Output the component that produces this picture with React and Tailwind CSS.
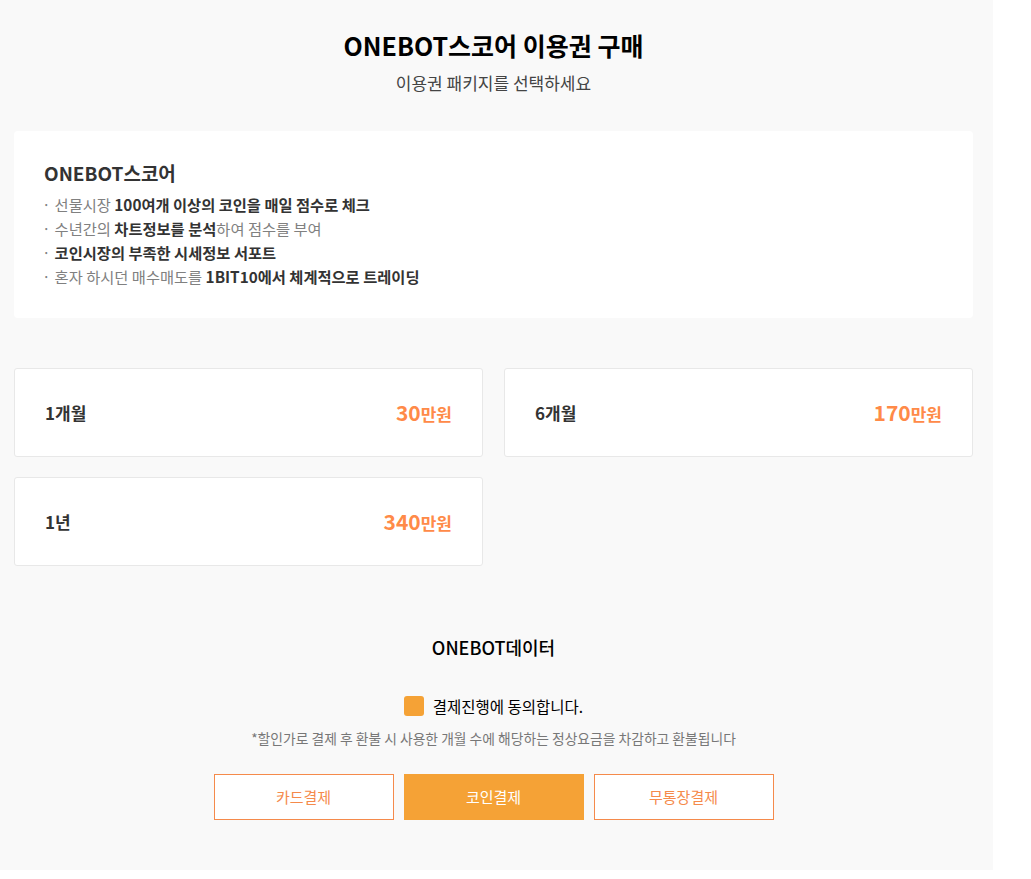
import React, { useState } from "react";

const plans = [
  { id: 1, label: "1개월", price: "30" },
  { id: 2, label: "6개월", price: "170" },
  { id: 3, label: "1년", price: "340" },
];

const features = [
  [["선물시장 ", false], ["100여개 이상의 코인을 매일 점수로 체크", true]],
  [["수년간의 ", false], ["차트정보를 분석", true], ["하여 점수를 부여", false]],
  [["코인시장의 부족한 시세정보 서포트", true]],
  [["혼자 하시던 매수매도를 ", false], ["1BIT10에서 체계적으로 트레이딩", true]],
];

export default function App() {
  const [agree, setAgree] = useState(true);
  const [method, setMethod] = useState("coin");

  return (
    <div
      className="w-[993px] bg-[#f9f9f9] pl-[14px] pr-[20px] pt-[30px] pb-[50px]"
      style={{ fontFamily: '"Noto Sans CJK KR", "Noto Sans", sans-serif' }}
    >
      <h1 className="text-center text-[25px] leading-[31px] font-bold text-black">
        ONEBOT스코어 이용권 구매
      </h1>
      <p className="mt-[10px] text-center text-[17px] leading-[24px] text-[#444]">
        이용권 패키지를 선택하세요
      </p>

      <div className="mt-[36px] bg-white rounded-[4px] pl-[30px] pt-[28px] pb-[30px]">
        <h2 className="text-[19px] leading-[28px] font-bold text-[#333]">ONEBOT스코어</h2>
        <ul className="mt-[5px]">
          {features.map((line, i) => (
            <li key={i} className="text-[15.3px] leading-[24px] text-[#808080]">
              <span className="-ml-[2px] mr-[4px]">·</span>
              {line.map(([t, bold], j) => (
                <span key={j} className={bold ? "font-bold text-[#333]" : ""}>
                  {t}
                </span>
              ))}
            </li>
          ))}
        </ul>
      </div>

      <div className="mt-[50px] grid grid-cols-2 gap-x-[21px] gap-y-[20px]">
        {plans.map((p) => (
          <div
            key={p.id}
            className="h-[89px] bg-white border border-[#e8e8e8] rounded-[3px] flex items-center justify-between px-[30px]"
          >
            <span className="text-[17px] font-bold text-[#333]">{p.label}</span>
            <span className="text-[#ff8a48] font-bold flex items-baseline">
              <span className="text-[21px]">{p.price}</span>
              <span className="text-[17px]">만원</span>
            </span>
          </div>
        ))}
      </div>

      <h3 className="mt-[68px] text-center text-[18px] leading-[26px] font-medium text-black">
        ONEBOT데이터
      </h3>

      <label className="mt-[34px] flex items-center justify-center gap-[9px] cursor-pointer">
        <span
          onClick={() => setAgree(!agree)}
          className={`w-[20px] h-[20px] rounded-[3px] ${agree ? "bg-[#f5a236]" : "bg-white border border-[#ccc]"}`}
        />
        <span className="text-[15.5px] leading-[24px] text-black">결제진행에 동의합니다.</span>
      </label>
      <p className="mt-[10px] text-center text-[13.8px] leading-[20px] text-[#777]">
        *할인가로 결제 후 환불 시 사용한 개월 수에 해당하는 정상요금을 차감하고 환불됩니다
      </p>

      <div className="mt-[26px] flex justify-center gap-[10px]">
        {[
          ["card", "카드결제"],
          ["coin", "코인결제"],
          ["bank", "무통장결제"],
        ].map(([k, t]) => (
          <button
            key={k}
            onClick={() => setMethod(k)}
            className={`w-[180px] h-[46px] text-[15px] border ${
              method === k
                ? "bg-[#f5a236] border-[#f5a236] text-white"
                : "bg-white border-[#f58a4b] text-[#f58a4b]"
            }`}
          >
            {t}
          </button>
        ))}
      </div>
    </div>
  );
}
